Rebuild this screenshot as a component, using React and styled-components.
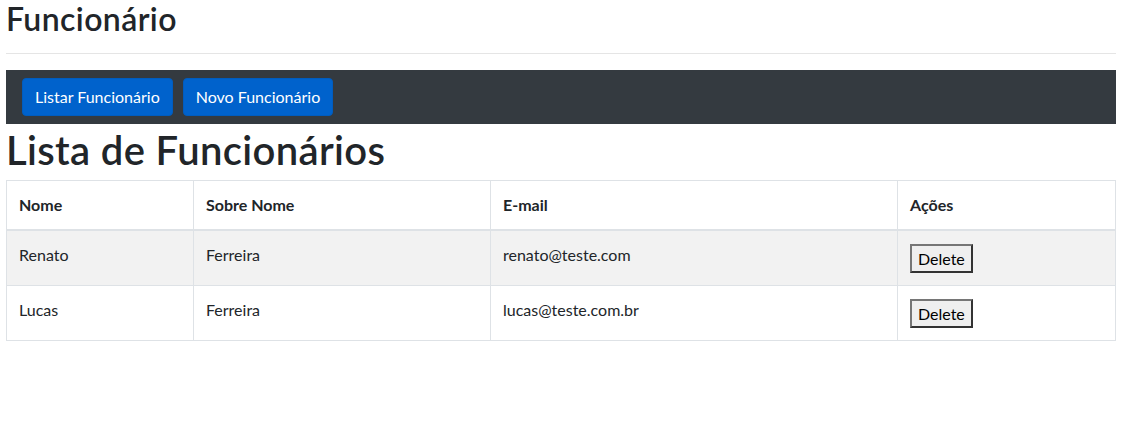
import React from "react";
import styled, { createGlobalStyle } from "styled-components";

const GlobalStyle = createGlobalStyle`
  body {
    margin: 0;
    background: #fff;
    color: #212529;
    font-family: Lato, "Liberation Sans", sans-serif;
    font-size: 16px;
  }
`;

const funcionarios = [
  { id: 1, nome: "Renato", sobreNome: "Ferreira", email: "renato@teste.com" },
  { id: 2, nome: "Lucas", sobreNome: "Ferreira", email: "lucas@teste.com.br" },
];

const Page = styled.div`
  padding: 0 9px 0 6px;
`;

const Title = styled.h2`
  margin: 0;
  font-size: 32px;
  font-weight: 600;
  line-height: 38px;
  letter-spacing: 0.4px;
`;

const Divider = styled.hr`
  margin: 15px 0 16px;
  border: 0;
  border-top: 1px solid rgba(0, 0, 0, 0.1);
`;

const NavBar = styled.nav`
  display: flex;
  gap: 10px;
  padding: 8px 16px;
  background: #343a40;
`;

const NavButton = styled.a`
  display: inline-block;
  padding: 6px 12px;
  border: 1px solid #005cbf;
  border-radius: 4px;
  background: #0062cc;
  color: #fff;
  font-size: 16px;
  line-height: 24px;
  text-decoration: none;
  cursor: pointer;
`;

const PageTitle = styled.h1`
  margin: 2px 0 6px;
  font-size: 40px;
  font-weight: 600;
  line-height: 48px;
  letter-spacing: 0.35px;
`;

const Table = styled.table`
  width: 100%;
  border-collapse: collapse;
  table-layout: fixed;
  border: 1px solid #dee2e6;
`;

const Th = styled.th`
  box-sizing: border-box;
  width: ${(p) => (p.$w ? `${p.$w}px` : "auto")};
  padding: 12px;
  border: 1px solid #dee2e6;
  border-bottom-width: 2px;
  text-align: left;
  vertical-align: bottom;
  font-weight: 700;
  line-height: 24px;
`;

const Row = styled.tr`
  background: ${(p) => (p.$striped ? "#f2f2f2" : "#fff")};
`;

const Td = styled.td`
  padding: 12px;
  border: 1px solid #dee2e6;
  vertical-align: top;
  line-height: 24px;
`;

const DeleteButton = styled.button`
  display: inline-block;
  margin-top: 1px;
  height: 29px;
  padding: 0 6px;
  border: 2px solid #333;
  border-top-color: #767676;
  border-left-color: #767676;
  background: #efefef;
  color: #000;
  font-family: inherit;
  font-size: 16px;
  vertical-align: top;
`;

export default function App() {
  return (
    <Page>
      <GlobalStyle />
      <Title>Funcionário</Title>
      <Divider />
      <NavBar>
        <NavButton>Listar Funcionário</NavButton>
        <NavButton>Novo Funcionário</NavButton>
      </NavBar>
      <PageTitle>Lista de Funcionários</PageTitle>
      <Table>
        <thead>
          <tr>
            <Th $w={187}>Nome</Th>
            <Th $w={297}>Sobre Nome</Th>
            <Th $w={407}>E-mail</Th>
            <Th>Ações</Th>
          </tr>
        </thead>
        <tbody>
          {funcionarios.map((f, i) => (
            <Row key={f.id} $striped={i % 2 === 0}>
              <Td>{f.nome}</Td>
              <Td>{f.sobreNome}</Td>
              <Td>{f.email}</Td>
              <Td>
                <DeleteButton>Delete</DeleteButton>
              </Td>
            </Row>
          ))}
        </tbody>
      </Table>
    </Page>
  );
}
